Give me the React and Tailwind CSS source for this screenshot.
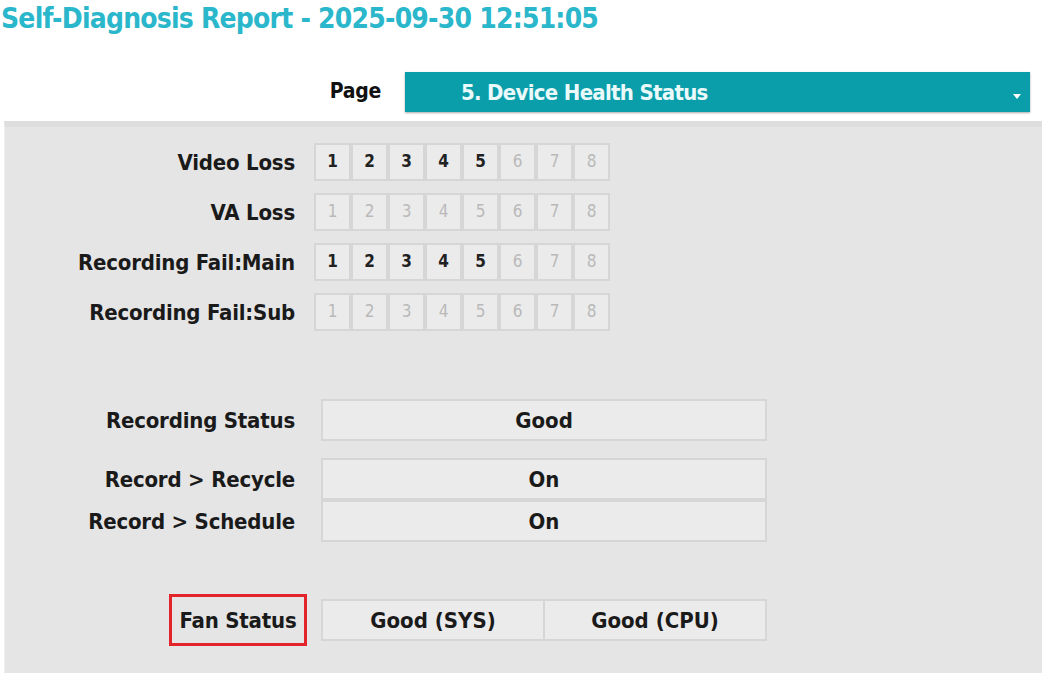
const FONT = "font-['Liberation_Sans_Narrow','DejaVu_Sans_Condensed',sans-serif]";

const channelRows = [
  { label: "Video Loss", active: 5 },
  { label: "VA Loss", active: 0 },
  { label: "Recording Fail:Main", active: 5 },
  { label: "Recording Fail:Sub", active: 0 },
];

function ChannelRow({ label, active }) {
  return (
    <div className="flex items-center h-[50px]">
      <div className="w-[290px] text-right text-[22px] font-bold text-[#1a1a1a] tracking-[-0.2px]">
        {label}
      </div>
      <div className="ml-[19px] flex">
        {[1, 2, 3, 4, 5, 6, 7, 8].map((n) => (
          <div
            key={n}
            className={
              "w-[37px] h-[38px] flex items-center justify-center border-2 border-[#d6d6d6] bg-[#ebebeb] text-[17px] " +
              (n <= active ? "text-[#222] font-semibold" : "text-[#b9b9b9]")
            }
          >
            {n}
          </div>
        ))}
      </div>
    </div>
  );
}

function StatusRow({ label, children, boxed }) {
  return (
    <div className="flex items-center">
      <div className="w-[302px] flex justify-end">
        <div
          className={
            "text-right text-[22px] font-bold text-[#1a1a1a] tracking-[-0.2px] " +
            (boxed ? "border-[3px] border-[#e3242b] h-[52px] w-[138px] flex items-center justify-center" : "pr-[12px]")
          }
        >
          {label}
        </div>
      </div>
      <div className="ml-[14px] flex w-[446px] h-[42px] border-2 border-[#d6d6d6] bg-[#ebebeb]">
        {children}
      </div>
    </div>
  );
}

export default function App() {
  return (
    <div className={"w-[1042px] h-[673px] bg-white overflow-hidden flex flex-col " + FONT}>
      <h1 className="pl-[1px] pt-[1px] text-[28px] leading-[36px] font-bold text-[#2bb7cb] tracking-[-0.8px]">
        Self-Diagnosis Report - 2025-09-30 12:51:05
      </h1>

      <div className="mt-[35px] flex items-center h-[40px]">
        <div className="w-[381px] text-right text-[21px] font-bold text-[#111] tracking-[-0.3px]">Page</div>
        <div className="ml-[24px] w-[625px] h-[40px] bg-[#0a9eab] shadow-[0_1px_2px_rgba(0,0,0,0.35)] flex items-center relative">
          <span className="ml-[56px] text-[22px] font-bold text-[#eafafb] tracking-[-0.7px]">5. Device Health Status</span>
          <span className="absolute right-[9px] top-[22px] w-0 h-0 border-l-[4px] border-r-[4px] border-t-[5px] border-l-transparent border-r-transparent border-t-white" />
        </div>
      </div>

      <div className="mt-[9px] ml-[4px] flex-1 bg-[#e5e5e5] border-t-[6px] border-[#dedede] border-l border-l-[#eeeeee]">
        <div className="pt-[10px]">
          {channelRows.map((r) => (
            <ChannelRow key={r.label} {...r} />
          ))}
        </div>

        <div className="mt-[62px] flex flex-col">
          <StatusRow label="Recording Status">
            <div className="flex-1 flex items-center justify-center text-[22px] font-bold text-[#1a1a1a]">Good</div>
          </StatusRow>
          <div className="mt-[17px]">
            <StatusRow label="Record > Recycle">
              <div className="flex-1 flex items-center justify-center text-[22px] font-bold text-[#1a1a1a]">On</div>
            </StatusRow>
          </div>
          <StatusRow label="Record > Schedule">
            <div className="flex-1 flex items-center justify-center text-[22px] font-bold text-[#1a1a1a]">On</div>
          </StatusRow>
          <div className="mt-[52px]">
            <StatusRow label="Fan Status" boxed>
              <div className="flex-1 flex items-center justify-center text-[22px] font-bold text-[#1a1a1a] border-r-2 border-[#d6d6d6]">
                Good (SYS)
              </div>
              <div className="flex-1 flex items-center justify-center text-[22px] font-bold text-[#1a1a1a]">
                Good (CPU)
              </div>
            </StatusRow>
          </div>
        </div>
      </div>
    </div>
  );
}
